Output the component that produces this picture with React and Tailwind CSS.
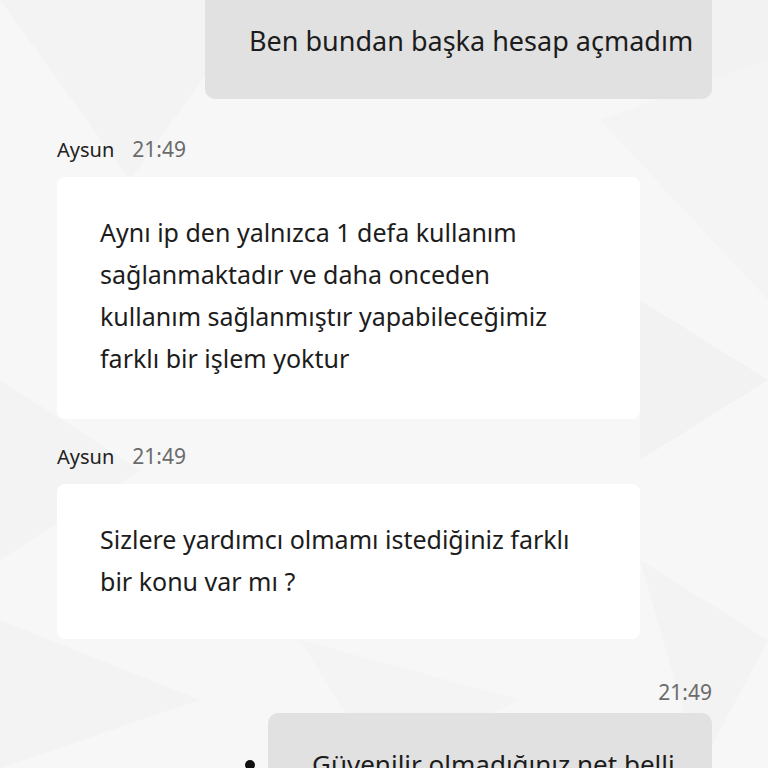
export default function App() {
  const font = { fontFamily: '"Noto Sans", "Open Sans", sans-serif' }
  return (
    <div className="relative w-[768px] h-[768px] overflow-hidden bg-[#f7f7f7] text-[#1c1c1c]" style={font}>
      {/* faint triangle backdrop */}
      <svg className="absolute inset-0" width="768" height="768" viewBox="0 0 768 768">
        <polygon points="0,0 260,0 130,180" fill="#f3f3f3" />
        <polygon points="640,0 768,0 768,150" fill="#f2f2f2" />
        <polygon points="600,120 768,60 768,300" fill="#f4f4f4" />
        <polygon points="0,380 140,470 0,560" fill="#f3f3f3" />
        <polygon points="640,300 768,380 640,460" fill="#f2f2f2" />
        <polygon points="0,620 200,700 0,768" fill="#f3f3f3" />
        <polygon points="640,560 768,640 700,768" fill="#f3f3f3" />
        <polygon points="300,640 520,700 380,768" fill="#f4f4f4" />
      </svg>
      <div className="relative flex flex-col pl-[57px] pr-[56px]">
        {/* outgoing */}
        <div className="flex justify-end">
          <div className="w-[507px] h-[99px] rounded-b-[10px] bg-[#e1e1e1] pl-[44px] pt-[21px] text-[27px] leading-[40px]">
            Ben bundan başka hesap açmadım
          </div>
        </div>

        <div className="mt-[35px] flex items-baseline gap-[18px] text-[20px] leading-[30px]">
          <span className="text-[#222]">Aysun</span>
          <span className="text-[21px] text-[#6b6b6b]">21:49</span>
        </div>
        <div className="mt-[12px] w-[583px] rounded-[8px] bg-white pl-[43px] pr-[30px] pt-[34px] pb-[40px] text-[25px] leading-[42px]">
          <p>Aynı ip den yalnızca 1 defa kullanım</p>
          <p>sağlanmaktadır ve daha onceden</p>
          <p>kullanım sağlanmıştır yapabileceğimiz</p>
          <p>farklı bir işlem yoktur</p>
        </div>

        <div className="mt-[22px] flex items-baseline gap-[18px] text-[20px] leading-[30px]">
          <span className="text-[#222]">Aysun</span>
          <span className="text-[21px] text-[#6b6b6b]">21:49</span>
        </div>
        <div className="mt-[12px] w-[583px] rounded-[8px] bg-white pl-[43px] pr-[30px] pt-[34px] pb-[37px] text-[25px] leading-[42px]">
          <p>Sizlere yardımcı olmamı istediğiniz farklı</p>
          <p>bir konu var mı ?</p>
        </div>

        <div className="mt-[38px] flex justify-end text-[21px] leading-[30px] text-[#6b6b6b]">21:49</div>
        <div className="mt-[6px] flex justify-end items-start">
          <div className="mt-[47px] mr-[13px] h-[10px] w-[10px] rounded-full bg-[#111]" />
          <div className="w-[444px] h-[120px] rounded-t-[10px] bg-[#e1e1e1] pl-[44px] pt-[31px] text-[26px] leading-[40px]">
            Güvenilir olmadığınız net belli
          </div>
        </div>
      </div>
    </div>
  )
}
